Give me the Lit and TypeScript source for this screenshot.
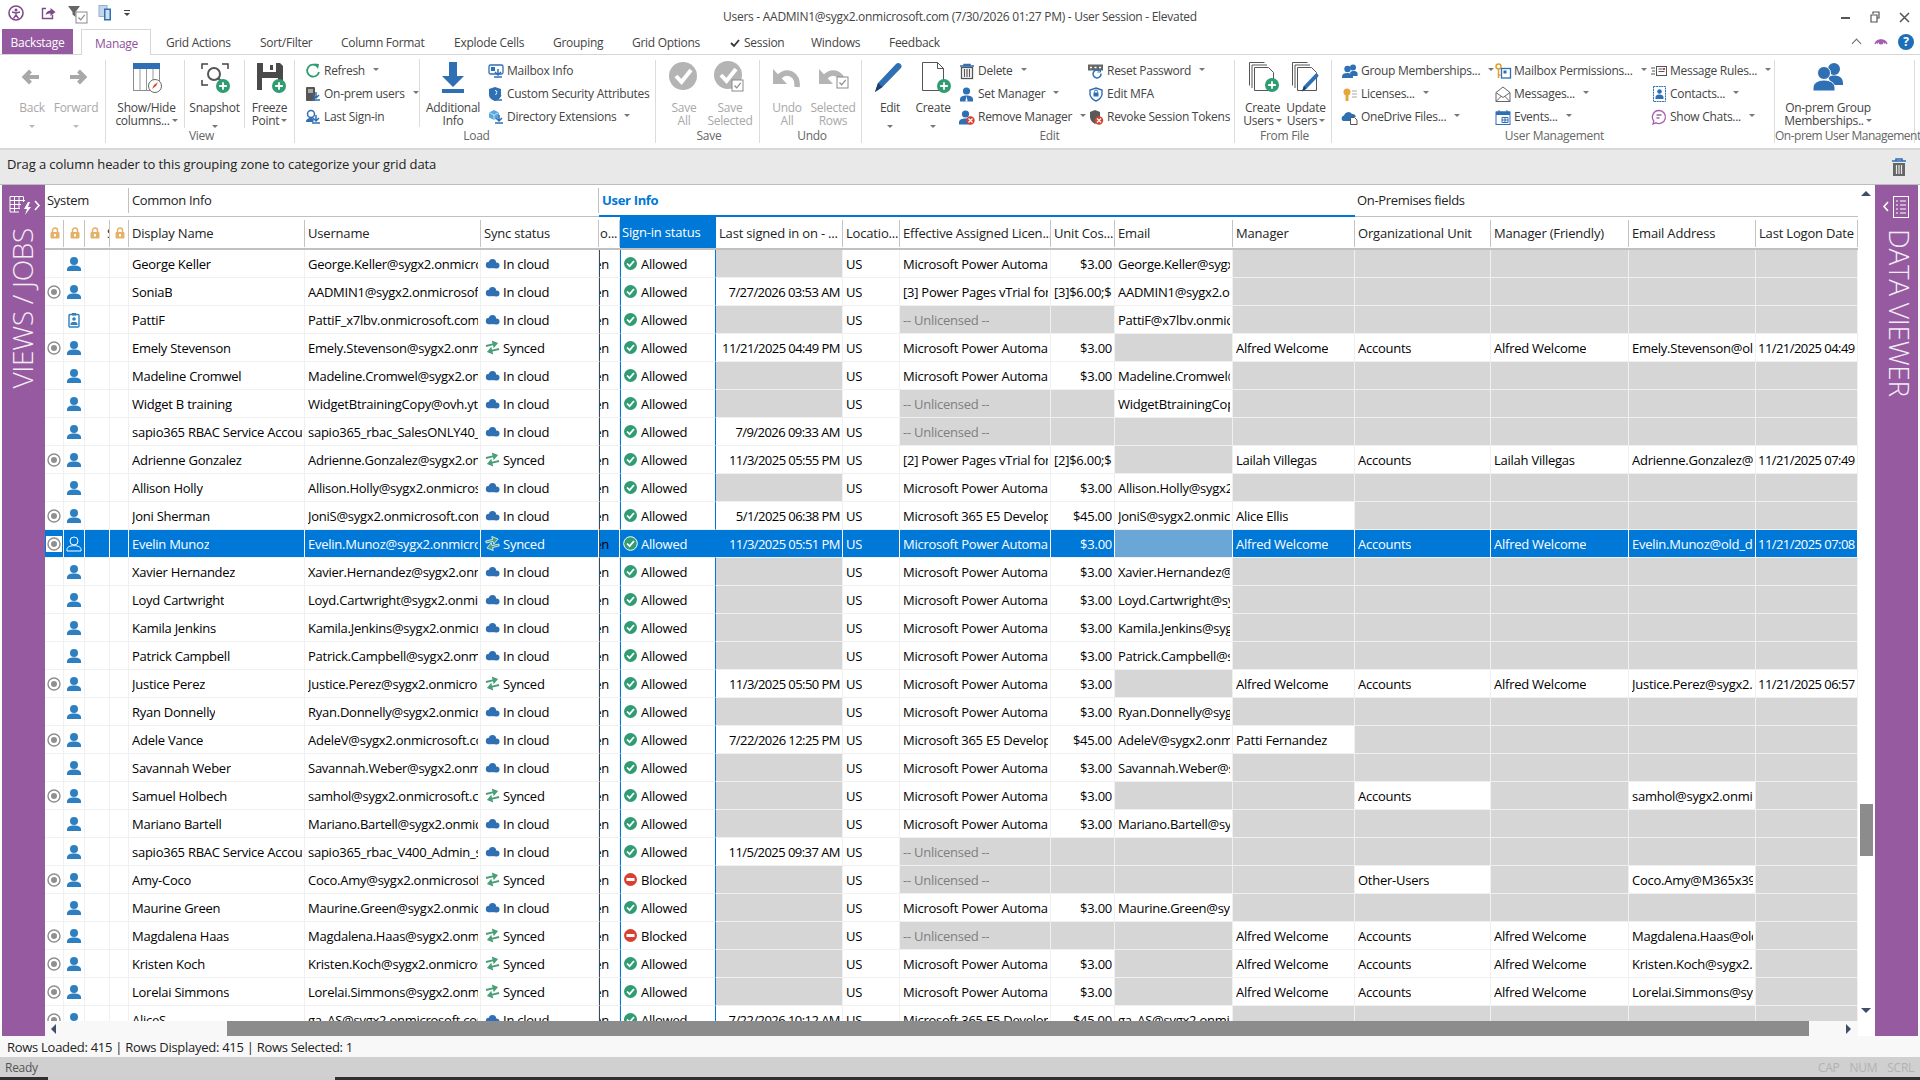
import { LitElement, html, css, svg, nothing } from 'lit';
import { customElement } from 'lit/decorators.js';
import { classMap } from 'lit/directives/class-map.js';

const BLUE = '#2f6fb3';
const GREEN = '#2f9c72';
const RED = '#d8412f';
const GREY = '#b4b4b4';

const plus = (cx: number, cy: number, r: number) => svg`
  <circle cx=${cx} cy=${cy} r=${r} fill=${GREEN} />
  <path d="M${cx - r * 0.55} ${cy}h${r * 1.1}M${cx} ${cy - r * 0.55}v${r * 1.1}" stroke="#fff" stroke-width="1.8" />`;

const redX = (cx: number, cy: number) => svg`
  <circle cx=${cx} cy=${cy} r="4.2" fill=${RED} />
  <path d="M${cx - 2} ${cy - 2}l4 4m0-4l-4 4" stroke="#fff" stroke-width="1.2" />`;

const downArrow = (cx: number, cy: number) => svg`
  <path d="M${cx} ${cy - 4}v6m-3-3l3 3 3-3M${cx - 4} ${cy + 4}h8" fill="none" stroke=${BLUE} stroke-width="1.5" />`;

const person = (color: string) => svg`
  <circle cx="8" cy="5" r="4" fill=${color} />
  <path d="M1 15v-1.500c0-2.600 2.700-4 7-4s7 1.400 7 4V15z" fill=${color} />`;

const checkBox = (x: number, y: number) => svg`
  <rect x=${x} y=${y} width="11" height="11" fill="#fff" stroke="#8a8a8a" />
  <path d="M${x + 2.5} ${y + 5.5}l2.2 2.4 4-5" fill="none" stroke="#8a8a8a" stroke-width="1.2" />`;

const pencil = (x: number, y: number, s: number) => svg`
  <g transform="translate(${x} ${y}) scale(${s})">
    <path d="M0 30l3-9L21 2c1.5-1.5 3-1.5 4.5 0s1.5 3 0 4.500L7.500 25z" fill=${BLUE} />
    <path d="M0 30l3-9 4.500 4z" fill="#1d3f66" />
  </g>`;

const undoShape = svg`
  <path d="M26 27c1-9-4-14-10-14-4 0-6 2-8 4" fill="none" stroke=${GREY} stroke-width="5.500" />
  <path d="M2 9v15h14z" fill=${GREY} />`;

const ICONS: Record<string, unknown> = {
  back: svg`<path d="M8 17h15M14.500 11l-6 6 6 6" fill="none" stroke="#a8a8a8" stroke-width="4" />`,
  forward: svg`<path d="M10 17h15M18.500 11l6 6-6 6" fill="none" stroke="#a8a8a8" stroke-width="4" />`,
  showhide: svg`
    <rect x="2.500" y="3.500" width="26" height="27" fill="#fff" stroke="#8d8d8d" />
    <rect x="2" y="3" width="27" height="6" fill=${BLUE} />
    <path d="M9 9v21M15.500 9v21M22 9v21" stroke="#9a9a9a" />
    <circle cx="24" cy="26" r="6.500" fill="#fff" stroke="#666" />
    <path d="M21 29l2-4 4-3-2 4z" fill="#d8412f" />`,
  snapshot: svg`
    <path d="M3 9V4h6M23 4h6v5M3 20v5h6" fill="none" stroke="#444" stroke-width="1.500" />
    <circle cx="15" cy="14" r="6" fill="none" stroke="#555" stroke-width="2" />
    <path d="M19 18l4 4" stroke="#555" stroke-width="2" />
    ${plus(24, 26, 7)}`,
  freeze: svg`
    <path d="M3 3h23l3 3v24H3z" fill="#4a4a4a" />
    <rect x="9" y="3" width="13" height="9" fill="#fff" />
    <rect x="16" y="5" width="3" height="5" fill="#4a4a4a" />
    <rect x="8" y="18" width="16" height="12" fill="#fff" />
    ${plus(25, 26, 7)}`,
  additional: svg`
    <path d="M12 2h8v14h7L16 27 5 16h7z" fill=${BLUE} />
    <rect x="5" y="29" width="22" height="4" fill=${BLUE} />`,
  saveAll: svg`
    <circle cx="15" cy="16" r="14" fill=${GREY} />
    <path d="M8 16l5.500 6L23 10" fill="none" stroke="#fff" stroke-width="4" />`,
  saveSel: svg`
    <circle cx="14" cy="15" r="14" fill=${GREY} />
    <path d="M7 15l5.500 6L22 9" fill="none" stroke="#fff" stroke-width="4" />
    <g transform="translate(18 20)">${checkBox(0, 0)}</g>`,
  undoAll: svg`${undoShape}`,
  undoSel: svg`
    ${undoShape}
    <g transform="translate(20 17)">${checkBox(0, 0)}</g>`,
  edit: svg`<g transform="translate(1 2)">${pencil(0, 0, 1)}</g>`,
  create: svg`
    <path d="M5.500 2.500h15l6 6v22h-21z" fill="#fff" stroke="#555" />
    <path d="M20.500 2.500v6h6" fill="none" stroke="#555" />
    ${plus(27, 26, 7)}`,
  createUsers: svg`
    <path d="M2.500 2.500h15M2.500 2.500v23M5 5h15M5 5v23" fill="none" stroke="#555" />
    <path d="M7.500 7.500h14l5 5v18h-19z" fill="#fff" stroke="#555" />
    ${plus(25, 25, 7)}`,
  updateUsers: svg`
    <path d="M2.500 2.500h15M2.500 2.500v23M5 5h15M5 5v23" fill="none" stroke="#555" />
    <path d="M7.500 7.500h14l5 5v18h-19z" fill="#fff" stroke="#555" />
    ${pencil(12, 13, 0.62)}`,
  groupsBig: svg`
    <circle cx="22" cy="9" r="6" fill=${BLUE} />
    <path d="M16 17c4-2 9-2 12 0s3 5 3 8H20z" fill=${BLUE} />
    <circle cx="12" cy="13" r="6.500" fill=${BLUE} stroke="#fff" />
    <path d="M1 31v-3c0-5 5-8 11-8s11 3 11 8v3z" fill=${BLUE} stroke="#fff" />`,
  refresh: svg`
    <path d="M12.500 3.500A6 6 0 1 0 14 9" fill="none" stroke=${GREEN} stroke-width="1.800" />
    <path d="M9 .5l5 .5-1 5z" fill=${GREEN} />`,
  onprem: svg`
    <rect x="1" y="1" width="9" height="14" rx="1" fill="#555" />
    <path d="M3 4h5M3 6h5" stroke="#fff" />
    ${downArrow(11, 10)}`,
  lastsign: svg`
    <circle cx="6" cy="5" r="3.500" fill="none" stroke=${BLUE} stroke-width="1.500" />
    <path d="M1 13c0-3 2-4 5-4 1 0 2 .2 2.500.5V13z" fill=${BLUE} />
    ${downArrow(11, 10)}`,
  mailbox: svg`
    <rect x="1" y="2" width="14" height="9" rx="1.500" fill="none" stroke=${BLUE} stroke-width="1.300" />
    <rect x="3" y="4" width="4" height="4" fill=${BLUE} />
    ${downArrow(10, 10)}`,
  security: svg`
    <path d="M7 1l6 2v6c0 3-3 5-6 6-3-1-6-3-6-6V3z" fill=${BLUE} />
    <path d="M7 4.500a2 2 0 0 1 0 4" fill="none" stroke="#fff" />
    ${downArrow(10, 10)}`,
  directory: svg`
    <path d="M6 1l5 2.500v5L6 11 1 8.500v-5z" fill="#5aa7de" />
    <path d="M1 3.500L6 6l5-2.500M6 6v5" fill="none" stroke="#fff" stroke-width=".6" />
    ${downArrow(11, 10)}`,
  trash: svg`
    <path d="M1 3h14M5 3V1.500h6V3" fill="none" stroke=${BLUE} stroke-width="1.500" />
    <rect x="2.500" y="4.500" width="11" height="11" fill="none" stroke="#555" stroke-width="1.300" />
    <path d="M5.500 6v8M8 6v8M10.500 6v8" stroke="#555" stroke-width="1.200" />`,
  setManager: svg`
    <circle cx="7.500" cy="5" r="3.600" fill=${BLUE} />
    <path d="M1 15.500v-2c0-2.600 2.500-4 6.500-4s6.500 1.400 6.500 4v2z" fill=${BLUE} />
    <path d="M7.500 10l-1.200 5.500h2.400z" fill="#fff" />`,
  removeManager: svg`
    <circle cx="6.500" cy="5" r="3.600" fill=${BLUE} />
    <path d="M0 15.500v-2c0-2.600 2.500-4 6.500-4 2 0 3 .3 4 1v5z" fill=${BLUE} />
    ${redX(11.500, 11.500)}`,
  resetPassword: svg`
    <rect x="0" y="1.500" width="15" height="6" fill="#666" />
    <path d="M2 4.500h2M6.500 4.500h2M11 4.500h2" stroke="#fff" stroke-width="1.600" />
    <path d="M13 10.500a4 4 0 1 1-1.500-2.700" fill="none" stroke=${BLUE} stroke-width="1.500" />
    <path d="M12.500 6v3h-3" fill="none" stroke=${BLUE} />`,
  mfa: svg`
    <path d="M8 2l6 2v4c0 3-3 6-6 7-3-1-6-4-6-7V4z" fill="none" stroke=${BLUE} stroke-width="1.400" />
    <rect x="5.500" y="6.500" width="5" height="4" fill=${BLUE} />
    <path d="M6.500 6.500v-1a1.500 1.500 0 0 1 3 0v1" fill="none" stroke=${BLUE} />`,
  revoke: svg`
    <path d="M7 1l5 2v5c0 3-2 5-5 7-3-2-5-4-5-7V3z" fill="#5a5a5a" />
    ${redX(11, 11.500)}`,
  groups: svg`
    <circle cx="11" cy="4.500" r="3" fill=${BLUE} />
    <path d="M8 9c2-1.500 6-1.500 7 0s.500 3 .500 4h-6z" fill=${BLUE} />
    <circle cx="5.500" cy="6" r="3.200" fill=${BLUE} />
    <path d="M0 15v-1.500C0 11 2.200 10 5.500 10s5.500 1 5.500 3.500V15z" fill=${BLUE} />`,
  mailboxPerm: svg`
    <circle cx="3.500" cy="3.500" r="2.500" fill="none" stroke="#e0a030" stroke-width="1.500" />
    <path d="M3.500 6v9M3.500 12h2" stroke="#e0a030" stroke-width="1.500" />
    <rect x="6.500" y="5.500" width="9" height="9.500" fill="none" stroke=${BLUE} stroke-width="1.300" />
    <rect x="8.500" y="7.500" width="3" height="3" fill=${BLUE} />`,
  licenses: svg`
    <circle cx="5" cy="6" r="3.500" fill="#e8a53a" />
    <rect x="3.500" y="9" width="3" height="6" fill="#e8a53a" />
    <path d="M10 5h5M10 8h5M10 11h5" stroke="#aaa" />`,
  onedrive: svg`
    <path d="M1 12a3 3 0 0 1 1-5.500 4.500 4.500 0 0 1 8-1.500 3.500 3.500 0 0 1 4 2.500L8 9.500V12z" fill=${BLUE} />
    <path d="M8.500 8.500h4l2.500 2.500v4.500H8.500z" fill="#fff" stroke="#555" />`,
  messages: svg`
    <path d="M1 6.500L8 1l7 5.500v9H1z" fill="#fff" stroke="#666" />
    <path d="M1 6.500l7 5 7-5M1 15.500l5.500-5.500M15 15.500L9.500 10" fill="none" stroke="#666" />`,
  events: svg`
    <rect x="1" y="3" width="14" height="12.500" fill="#fff" stroke=${BLUE} />
    <rect x="1" y="2.500" width="14" height="3.500" fill=${BLUE} />
    <path d="M4 1v3M12 1v3" stroke=${BLUE} />
    <path d="M7 8.500h6M7 11h6M7 13.500h6M7 8.500v5M10 8.500v5M13 8.500v5" stroke=${BLUE} fill="none" />`,
  rules: svg`
    <rect x="5.500" y="3.500" width="10" height="9" fill="#fff" stroke="#555" />
    <path d="M7.500 6h4M7.500 8.500h6M0 5h4M1 8h3M0 11h4" stroke="#555" />
    <rect x="12" y="5" width="2" height="2" fill="#d8412f" />`,
  contacts: svg`
    <rect x="2.500" y=".5" width="12" height="15" fill="#fff" stroke=${BLUE} stroke-dasharray="2 .6" />
    <circle cx="8.500" cy="5.500" r="2.300" fill=${BLUE} />
    <path d="M4.500 13v-1.500c0-2 1.500-3 4-3s4 1 4 3V13z" fill=${BLUE} />`,
  chats: svg`
    <path d="M8 1.500a6.500 6.500 0 1 1-3 12.300L2 15l.8-3A6.500 6.500 0 0 1 8 1.500z" fill="none" stroke="#a45db0" stroke-width="1.300" />
    <path d="M5.500 6h5M5.500 9h3" stroke="#a45db0" stroke-width="1.300" />`,
  logo: svg`
    <circle cx="8" cy="8" r="7" fill="none" stroke="#7d4a8c" stroke-width="1.600" />
    <circle cx="8" cy="5" r="1.500" fill="#7d4a8c" />
    <path d="M4 7l4 1 4-1M8 8v2l-2.500 3.500M8 10l2.500 3.500" fill="none" stroke="#7d4a8c" stroke-width="1.300" />`,
  share: svg`
    <path d="M6 3.500H2.500v10h10V10" fill="none" stroke="#7d4a8c" stroke-width="1.400" />
    <path d="M5.500 10c.5-3 2.500-4.500 5-4.500V3l5 4-5 4V8.500c-2 0-3.500.5-5 1.500z" fill="#7d4a8c" />`,
  funnel: svg`
    <path d="M0 1h12L7.500 7v5L4.500 9.500V7z" fill="#666" />
    ${checkBox(8, 7)}`,
  copies: svg`
    <rect x="1" y="0.500" width="8" height="11" fill="#c4d6ea" stroke="#8fb0d0" />
    <rect x="6" y="3.500" width="7" height="12" fill=${BLUE} />
    <rect x="7.500" y="5" width="4" height="9" fill="#cfe0f0" />`,
  bin: svg`
    <path d="M1 3h14M5 3V1h6v2" fill="none" stroke=${BLUE} stroke-width="1.600" />
    <rect x="2" y="5" width="12" height="13" fill="#666" />
    <path d="M5.500 7v9M8 7v9M10.500 7v9" stroke="#e9e9e9" stroke-width="1.200" />`,
  broadcast: svg`
    <circle cx="8" cy="8" r="2.500" fill="#a45db0" />
    <path d="M2 10a6.500 6.500 0 0 1 12 0M4 9.500a4.200 4.200 0 0 1 8 0" fill="none" stroke="#a45db0" stroke-width="1.400" />`,
  viewsJobs: svg`
    <path d="M1 1.500h13M1 5.500h15M1 9.500h11M1 13.500h10M1 17h9M1 1.500V17M5.500 1.500V17M10 1.500V14M14.500 1.500V7" fill="none" stroke="#fff" />
    <path d="M19 7l-4 7h3l-2 6 6-8h-3l2-5z" fill="#fff" />
    <path d="M26 6l4 4.500-4 4.500" fill="none" stroke="#fff" stroke-width="1.600" />`,
  dataViewer: svg`
    <path d="M6 7L2 11.500 6 16" fill="none" stroke="#fff" stroke-width="1.600" />
    <rect x="11.500" y="1.500" width="15" height="21" fill="none" stroke="#fff" />
    <path d="M14 6h2M18 6h6M14 10h2M18 10h6M14 14h2M18 14h6M14 18h2M18 18h6" stroke="#fff" />`,
};

const icon = (name: string, w = 16, h = 16) => html`
  <svg class="ico" width=${w} height=${h} viewBox="0 0 ${w} ${h}">${ICONS[name]}</svg>`;

const bigIcon = (name: string) => html`
  <svg class="ico" width="32" height="34" viewBox="0 0 32 34">${ICONS[name]}</svg>`;

const lockIcon = html`
  <svg class="ico" width="10" height="12" viewBox="0 0 10 12">
    <path d="M2.500 5V3.500a2.500 2.500 0 0 1 5 0V5" fill="none" stroke="#e6b167" stroke-width="1.500" />
    <rect x="0.500" y="5" width="9" height="6.500" rx="1" fill="#e6b167" />
    <rect x="4" y="7" width="2" height="2.500" fill="#fff" />
  </svg>`;

const circleIcon = html`
  <svg class="ico" width="14" height="14" viewBox="0 0 14 14">
    <circle cx="7" cy="7" r="6" fill="#fff" stroke="#8f8f8f" stroke-width="1.400" />
    <circle cx="7" cy="7" r="3" fill="#8f8f8f" />
  </svg>`;

const userIcon = (selected: boolean) => html`
  <svg class="ico" width="16" height="16" viewBox="0 0 16 16">
    ${selected
      ? svg`<circle cx="8" cy="5" r="4" fill="none" stroke="#fff" /><path d="M1 15v-1.500c0-2.400 2.500-3.800 7-3.800s7 1.400 7 3.800V15z" fill="none" stroke="#fff" />`
      : person('#2d7fc0')}
  </svg>`;

const badgeIcon = html`
  <svg class="ico" width="16" height="16" viewBox="0 0 16 16">
    <rect x="3" y="2.500" width="10" height="12.500" rx="1" fill="none" stroke="#2d7fc0" stroke-width="1.400" />
    <rect x="6" y="1" width="4" height="2.500" fill="#2d7fc0" />
    <circle cx="8" cy="7" r="1.800" fill="#2d7fc0" />
    <path d="M4.500 13v-1c0-1.400 1.500-2 3.500-2s3.500.6 3.500 2v1z" fill="#2d7fc0" />
  </svg>`;

const cloudIcon = html`
  <svg class="ico" width="15" height="12" viewBox="0 0 15 12">
    <circle cx="4" cy="7" r="3.200" fill="#2f6fb3" />
    <circle cx="7.500" cy="4.500" r="3.600" fill="#2f6fb3" />
    <circle cx="11.500" cy="7.500" r="3" fill="#2f6fb3" />
    <rect x="4" y="7" width="7.500" height="3.200" fill="#2f6fb3" />
  </svg>`;

const syncIcon = (selected: boolean) => html`
  <svg class="ico" width="15" height="15" viewBox="0 0 15 15">
    <g transform="rotate(-14 7.500 7.500)" stroke=${selected ? '#fff' : 'none'} stroke-width=".7">
      <path d="M1.500 3.500h7V.5l5.500 4-5.500 4v-3h-7z" fill="#4a9e78" />
      <path d="M13.500 9.500h-7v-3L1 10.500l5.500 4v-3h7z" fill="#4a9e78" />
    </g>
  </svg>`;

const allowedIcon = (selected: boolean) => html`
  <svg class="ico" width="15" height="15" viewBox="0 0 15 15">
    <circle cx="7.500" cy="7.500" r=${selected ? 6.800 : 6.500} fill="#2f9c72" stroke=${selected ? '#fff' : 'none'} />
    <path d="M4 7.500l2.600 2.700L11 5" fill="none" stroke="#fff" stroke-width="1.800" />
  </svg>`;

const blockedIcon = html`
  <svg class="ico" width="15" height="15" viewBox="0 0 15 15">
    <circle cx="7.500" cy="7.500" r="6.500" fill="#d8412f" />
    <rect x="3.500" y="6" width="8" height="3" fill="#fff" />
  </svg>`;

type SmallItem = { icon: string; text: string; caret?: boolean };
type RibbonItem =
  | { kind: 'large'; w: number; pad?: number; icon: string; lines: string[]; caret?: 'inline' | 'below'; off?: boolean; sep?: boolean }
  | { kind: 'stack'; w: number; pad: number; items: SmallItem[]; sep?: boolean };
type RibbonGroup = { w: number; pad?: number; label?: string; tight?: boolean; items: RibbonItem[] };

const GROUPS: RibbonGroup[] = [
  { w: 104, pad: 8, items: [
    { kind: 'large', w: 44, icon: 'back', lines: ['Back'], caret: 'below', off: true },
    { kind: 'large', w: 44, icon: 'forward', lines: ['Forward'], caret: 'below', off: true },
  ] },
  { w: 189, label: 'View', items: [
    { kind: 'large', w: 79, pad: 3, icon: 'showhide', lines: ['Show/Hide', 'columns...'], caret: 'inline', sep: true },
    { kind: 'large', w: 60, icon: 'snapshot', lines: ['Snapshot'], caret: 'below', sep: true },
    { kind: 'large', w: 49, icon: 'freeze', lines: ['Freeze', 'Point'], caret: 'inline' },
  ] },
  { w: 361, label: 'Load', items: [
    { kind: 'stack', w: 125, pad: 10, sep: true, items: [
      { icon: 'refresh', text: 'Refresh', caret: true },
      { icon: 'onprem', text: 'On-prem users', caret: true },
      { icon: 'lastsign', text: 'Last Sign-in' },
    ] },
    { kind: 'large', w: 66, icon: 'additional', lines: ['Additional', 'Info'] },
    { kind: 'stack', w: 169, pad: 2, items: [
      { icon: 'mailbox', text: 'Mailbox Info' },
      { icon: 'security', text: 'Custom Security Attributes' },
      { icon: 'directory', text: 'Directory Extensions', caret: true },
    ] },
  ] },
  { w: 104, pad: 4, label: 'Save', items: [
    { kind: 'large', w: 48, icon: 'saveAll', lines: ['Save', 'All'], off: true },
    { kind: 'large', w: 44, icon: 'saveSel', lines: ['Save', 'Selected'], off: true },
  ] },
  { w: 102, pad: 4, label: 'Undo', items: [
    { kind: 'large', w: 46, icon: 'undoAll', lines: ['Undo', 'All'], off: true },
    { kind: 'large', w: 46, icon: 'undoSel', lines: ['Selected', 'Rows'], off: true },
  ] },
  { w: 373, pad: 6, label: 'Edit', items: [
    { kind: 'large', w: 44, icon: 'edit', lines: ['Edit'], caret: 'below' },
    { kind: 'large', w: 42, icon: 'create', lines: ['Create'], caret: 'below' },
    { kind: 'stack', w: 129, pad: 5, items: [
      { icon: 'trash', text: 'Delete', caret: true },
      { icon: 'setManager', text: 'Set Manager', caret: true },
      { icon: 'removeManager', text: 'Remove Manager', caret: true },
    ] },
    { kind: 'stack', w: 150, pad: 5, items: [
      { icon: 'resetPassword', text: 'Reset Password', caret: true },
      { icon: 'mfa', text: 'Edit MFA' },
      { icon: 'revoke', text: 'Revoke Session Tokens' },
    ] },
  ] },
  { w: 97, pad: 3, label: 'From File', items: [
    { kind: 'large', w: 46, pad: 3, icon: 'createUsers', lines: ['Create', 'Users'], caret: 'inline' },
    { kind: 'large', w: 44, icon: 'updateUsers', lines: ['Update', 'Users'], caret: 'inline' },
  ] },
  { w: 443, pad: 6, label: 'User Management', items: [
    { kind: 'stack', w: 153, pad: 4, items: [
      { icon: 'groups', text: 'Group Memberships...', caret: true },
      { icon: 'licenses', text: 'Licenses...', caret: true },
      { icon: 'onedrive', text: 'OneDrive Files...', caret: true },
    ] },
    { kind: 'stack', w: 156, pad: 4, items: [
      { icon: 'mailboxPerm', text: 'Mailbox Permissions...', caret: true },
      { icon: 'messages', text: 'Messages...', caret: true },
      { icon: 'events', text: 'Events...', caret: true },
    ] },
    { kind: 'stack', w: 126, pad: 4, items: [
      { icon: 'rules', text: 'Message Rules...', caret: true },
      { icon: 'contacts', text: 'Contacts...', caret: true },
      { icon: 'chats', text: 'Show Chats...', caret: true },
    ] },
  ] },
  { w: 140, label: 'On-prem User Management', tight: true, items: [
    { kind: 'large', w: 106, icon: 'groupsBig', lines: ['On-prem Group', 'Memberships..'], caret: 'inline' },
  ] },
];

const TABS = [
  { text: 'Grid Actions', w: 94 },
  { text: 'Sort/Filter', w: 81 },
  { text: 'Column Format', w: 113 },
  { text: 'Explode Cells', w: 99 },
  { text: 'Grouping', w: 79 },
  { text: 'Grid Options', w: 98 },
  { text: 'Session', w: 81, check: true },
  { text: 'Windows', w: 78 },
  { text: 'Feedback', w: 78 },
];

const HEADERS = ['Display Name', 'Username', 'Sync status', 'o...', 'Sign-in status', 'Last signed in on - ...', 'Locatio...',
  'Effective Assigned Licen...', 'Unit Cos...', 'Email', 'Manager', 'Organizational Unit', 'Manager (Friendly)', 'Email Address', 'Last Logon Date'];

const MPA = 'Microsoft Power Automate Free';
const E5 = 'Microsoft 365 E5 Developer (without Windows)';
const AW = 'Alfred Welcome';
const UNLIC = '-- Unlicensed --';

type User = {
  name: string; upn: string; last?: string; lic: string; cost?: string; email?: string;
  mgr?: string; ou?: string; friendly?: string; addr?: string; logon?: string;
  onPrem?: boolean; circle?: boolean; blocked?: boolean; badge?: boolean; selected?: boolean;
};

const cloudUser = (name: string, upn: string, email: string): User => ({ name, upn, lic: MPA, cost: '$3.00', email });
const synced = (name: string, upn: string, addr: string, extra: Partial<User> = {}): User => ({
  name, upn, lic: MPA, cost: '$3.00', mgr: AW, ou: 'Accounts', friendly: AW, addr, onPrem: true, circle: true, ...extra,
});

const USERS: User[] = [
  cloudUser('George Keller', 'George.Keller@sygx2.onmicrosoft.com', 'George.Keller@sygx2.onmicrosoft.com'),
  { name: 'SoniaB', upn: 'AADMIN1@sygx2.onmicrosoft.com', last: '7/27/2026 03:53 AM', lic: '[3] Power Pages vTrial for Makers', cost: '[3]$6.00;$3.00;$3.00', email: 'AADMIN1@sygx2.onmicrosoft.com', circle: true },
  { name: 'PattiF', upn: 'PattiF_x7lbv.onmicrosoft.com#EXT#', lic: UNLIC, email: 'PattiF@x7lbv.onmicrosoft.com', badge: true },
  synced('Emely Stevenson', 'Emely.Stevenson@sygx2.onmicrosoft.com', 'Emely.Stevenson@old_domain.com', { last: '11/21/2025 04:49 PM', logon: '11/21/2025 04:49 PM' }),
  cloudUser('Madeline Cromwel', 'Madeline.Cromwel@sygx2.onmicrosoft.com', 'Madeline.Cromwel@sygx2.onmicrosoft.com'),
  { name: 'Widget B training', upn: 'WidgetBtrainingCopy@ovh.ytt.com', lic: UNLIC, email: 'WidgetBtrainingCopy@ovh.ytt.com' },
  { name: 'sapio365 RBAC Service Account', upn: 'sapio365_rbac_SalesONLY40_admin', last: '7/9/2026 09:33 AM', lic: UNLIC },
  synced('Adrienne Gonzalez', 'Adrienne.Gonzalez@sygx2.onmicrosoft.com', 'Adrienne.Gonzalez@old_domain.com', { last: '11/3/2025 05:55 PM', lic: '[2] Power Pages vTrial for Makers', cost: '[2]$6.00;$3.00', mgr: 'Lailah Villegas', friendly: 'Lailah Villegas', logon: '11/21/2025 07:49 PM' }),
  cloudUser('Allison Holly', 'Allison.Holly@sygx2.onmicrosoft.com', 'Allison.Holly@sygx2.onmicrosoft.com'),
  { name: 'Joni Sherman', upn: 'JoniS@sygx2.onmicrosoft.com', last: '5/1/2025 06:38 PM', lic: E5, cost: '$45.00', email: 'JoniS@sygx2.onmicrosoft.com', mgr: 'Alice Ellis', circle: true },
  synced('Evelin Munoz', 'Evelin.Munoz@sygx2.onmicrosoft.com', 'Evelin.Munoz@old_domain.com', { last: '11/3/2025 05:51 PM', logon: '11/21/2025 07:08 PM', selected: true }),
  cloudUser('Xavier Hernandez', 'Xavier.Hernandez@sygx2.onmicrosoft.com', 'Xavier.Hernandez@sygx2.onmicrosoft.com'),
  cloudUser('Loyd Cartwright', 'Loyd.Cartwright@sygx2.onmicrosoft.com', 'Loyd.Cartwright@sygx2.onmicrosoft.com'),
  cloudUser('Kamila Jenkins', 'Kamila.Jenkins@sygx2.onmicrosoft.com', 'Kamila.Jenkins@sygx2.onmicrosoft.com'),
  cloudUser('Patrick Campbell', 'Patrick.Campbell@sygx2.onmicrosoft.com', 'Patrick.Campbell@sygx2.onmicrosoft.com'),
  synced('Justice Perez', 'Justice.Perez@sygx2.onmicrosoft.com', 'Justice.Perez@sygx2.onmicrosoft.com', { last: '11/3/2025 05:50 PM', logon: '11/21/2025 06:57 PM' }),
  cloudUser('Ryan Donnelly', 'Ryan.Donnelly@sygx2.onmicrosoft.com', 'Ryan.Donnelly@sygx2.onmicrosoft.com'),
  { name: 'Adele Vance', upn: 'AdeleV@sygx2.onmicrosoft.com', last: '7/22/2026 12:25 PM', lic: E5, cost: '$45.00', email: 'AdeleV@sygx2.onmicrosoft.com', mgr: 'Patti Fernandez', circle: true },
  cloudUser('Savannah Weber', 'Savannah.Weber@sygx2.onmicrosoft.com', 'Savannah.Weber@sygx2.onmicrosoft.com'),
  { name: 'Samuel Holbech', upn: 'samhol@sygx2.onmicrosoft.com', lic: MPA, cost: '$3.00', ou: 'Accounts', addr: 'samhol@sygx2.onmicrosoft.com', onPrem: true, circle: true },
  cloudUser('Mariano Bartell', 'Mariano.Bartell@sygx2.onmicrosoft.com', 'Mariano.Bartell@sygx2.onmicrosoft.com'),
  { name: 'sapio365 RBAC Service Account', upn: 'sapio365_rbac_V400_Admin_sygx2', last: '11/5/2025 09:37 AM', lic: UNLIC },
  { name: 'Amy-Coco', upn: 'Coco.Amy@sygx2.onmicrosoft.com', lic: UNLIC, ou: 'Other-Users', addr: 'Coco.Amy@M365x39.com', onPrem: true, circle: true, blocked: true },
  cloudUser('Maurine Green', 'Maurine.Green@sygx2.onmicrosoft.com', 'Maurine.Green@sygx2.onmicrosoft.com'),
  synced('Magdalena Haas', 'Magdalena.Haas@sygx2.onmicrosoft.com', 'Magdalena.Haas@old_domain.com', { lic: UNLIC, cost: undefined, blocked: true }),
  synced('Kristen Koch', 'Kristen.Koch@sygx2.onmicrosoft.com', 'Kristen.Koch@sygx2.onmicrosoft.com'),
  synced('Lorelai Simmons', 'Lorelai.Simmons@sygx2.onmicrosoft.com', 'Lorelai.Simmons@sygx2.onmicrosoft.com'),
  { name: 'AliceS', upn: 'ga_AS@sygx2.onmicrosoft.com', last: '7/22/2026 10:12 AM', lic: E5, cost: '$45.00', email: 'ga_AS@sygx2.onmicrosoft.com', circle: true },
];

@customElement('app-root')
export class AppRoot extends LitElement {
  static styles = css`
    :host {
      display: flex;
      flex-direction: column;
      width: 1920px;
      height: 1080px;
      overflow: hidden;
      background: #fff;
      color: #000;
      font-family: 'Open Sans', 'Noto Sans', sans-serif;
      font-size: 12px;
      letter-spacing: -0.28px;
      --cols: 19px 21px 25px 19px 176px 176px 118px 21px 96px 127px 57px 151px 64px 118px 122px 136px 138px 127px 102px;
    }
    .ico { display: block; flex: none; overflow: visible; }

    /* title bar */
    .title-bar {
      flex: none;
      height: 28px;
      display: grid;
      grid-template-columns: 1fr auto 1fr;
      align-items: center;
      color: #444;
      padding-top: 2px;
      box-sizing: border-box;
    }
    .title-text { margin-top: 2px; }
    .qat { display: flex; align-items: center; height: 24px; padding-left: 8px; margin-top: -5px; }
    .qat-a { width: 32px; }
    .qat-b { width: 28px; }
    .qat-c { width: 22px; padding-left: 2px; }
    .qat-more {
      width: 6px;
      height: 6px;
      margin-left: 4px;
      border-top: 1px solid #444;
      box-sizing: border-box;
    }
    .qat-more::after {
      content: '';
      display: block;
      margin-top: 2px;
      border-left: 3px solid transparent;
      border-right: 3px solid transparent;
      border-top: 3px solid #444;
    }
    .win { display: flex; justify-content: flex-end; align-items: center; gap: 19px; padding-right: 10px; margin-top: 4px; }

    /* tabs */
    .tabs {
      flex: none;
      height: 27px;
      display: flex;
      box-sizing: border-box;
      padding: 1px 0 0 2px;
      border-bottom: 1px solid #d6d6d6;
      color: #444;
    }
    .backstage {
      width: 71px;
      background: #955a9f;
      color: #fff;
      display: flex;
      align-items: center;
      justify-content: center;
      margin-right: 8px;
      padding-top: 2px;
      box-sizing: border-box;
    }
    .tab { display: flex; align-items: center; padding: 2px 0 0 14px; gap: 4px; box-sizing: border-box; }
    .tab.active {
      width: 70px;
      margin-right: 1px;
      height: 26px;
      padding-left: 13px;
      background: #fff;
      color: #8f4f9b;
      border: 1px solid #d6d6d6;
      border-bottom: 0;
    }
    .tab-tools { margin-left: auto; display: flex; align-items: center; gap: 9px; padding-right: 6px; }
    .collapse {
      width: 6px;
      height: 6px;
      border-left: 1.500px solid #666;
      border-top: 1.500px solid #666;
      transform: rotate(45deg);
      margin-top: 4px;
      margin-right: 4px;
    }
    .help {
      width: 16px;
      height: 16px;
      border-radius: 50%;
      background: #1e6fb8;
      color: #fff;
      font-weight: 700;
      font-size: 12px;
      display: flex;
      align-items: center;
      justify-content: center;
    }

    /* ribbon */
    .ribbon {
      flex: none;
      height: 95px;
      display: flex;
      align-items: flex-start;
      padding-left: 2px;
      box-sizing: border-box;
      border-bottom: 2px solid #d9d9d9;
      color: #444;
    }
    .group {
      flex: none;
      height: 83px;
      margin-top: 5px;
      box-sizing: border-box;
      border-right: 1px solid #dcdcdc;
      display: flex;
      flex-direction: column;
    }
    .group-body { display: flex; height: 69px; }
    .group-label { height: 13px; line-height: 13px; padding-left: 3px; text-align: center; color: #666; white-space: nowrap; }
    .group-label.tight { padding-left: 0; letter-spacing: -0.5px; }
    .large {
      flex: none;
      display: flex;
      flex-direction: column;
      align-items: center;
      box-sizing: border-box;
      line-height: 13px;
      white-space: nowrap;
    }
    .large.off { color: #a8a8a8; }
    .large.sep, .stack.sep { border-right: 1px solid #dcdcdc; height: 68px; }
    .large-icon { height: 34px; display: flex; align-items: center; margin-bottom: 7px; }
    .label-line { display: flex; align-items: center; gap: 2px; height: 13px; }
    .caret {
      display: block;
      flex: none;
      width: 0;
      height: 0;
      border-left: 3px solid transparent;
      border-right: 3px solid transparent;
      border-top: 3px solid #777;
    }
    .off .caret { border-top-color: #bbb; }
    .stack { flex: none; box-sizing: border-box; margin-top: -1px; }
    .small { display: flex; align-items: center; height: 23px; white-space: nowrap; gap: 3px; }
    .small .caret { margin-left: 5px; margin-bottom: 3px; }

    /* grouping zone */
    .zone {
      flex: none;
      height: 35px;
      box-sizing: border-box;
      background: #e9e9e9;
      border-bottom: 1px solid #bdbdbd;
      display: flex;
      align-items: center;
      justify-content: space-between;
      padding: 0 13px 0 7px;
      color: #222;
      font-size: 13px;
      letter-spacing: -0.1px;
    }
    .zone-text { padding-bottom: 6px; }

    /* main */
    .main { flex: 1; min-height: 0; display: flex; padding: 0 2px; }
    .side {
      flex: none;
      background: #955a9f;
      color: #f3ecf5;
      display: flex;
      flex-direction: column;
      align-items: center;
      font-weight: 300;
      font-size: 28px;
      letter-spacing: -0.3px;
      line-height: 32px;
      white-space: nowrap;
    }
    .side-left { width: 43px; padding-top: 10px; box-sizing: border-box; }
    .side-left .ico { margin-bottom: 12px; margin-left: 2px; }
    .side-left .side-text { writing-mode: vertical-rl; transform: rotate(180deg); margin-right: 3px; }
    .side-right { width: 43px; padding-top: 10px; box-sizing: border-box; }
    .side-right .ico { margin-bottom: 10px; margin-right: 1px; }
    .side-right .side-text { writing-mode: vertical-rl; margin-left: 7px; }

    .grid {
      flex: none;
      width: 1813px;
      display: flex;
      flex-direction: column;
      min-height: 0;
      font-size: 13px;
      letter-spacing: -0.25px;
    }
    .group-head {
      flex: none;
      height: 32px;
      display: grid;
      grid-template-columns: var(--cols);
      box-sizing: border-box;
      border-bottom: 1px solid #c0c0c0;
      letter-spacing: -0.32px;
    }
    .gh { display: flex; align-items: center; position: relative; padding: 0 0 2px 3px; color: #222; }
    .gh-system { grid-column: span 4; padding-left: 2px; }
    .gh-common { grid-column: span 3; }
    .gh-user { grid-column: span 8; color: #0078d7; font-weight: 700; }
    .gh-prem { grid-column: span 4; padding-left: 2px; }
    .gh-system::after, .gh-common::after {
      content: '';
      position: absolute;
      right: 0;
      top: 3px;
      bottom: 3px;
      width: 1px;
      background: #c0c0c0;
    }
    .gh-user::before {
      content: '';
      position: absolute;
      left: 0;
      right: 0;
      bottom: -1px;
      height: 2px;
      background: #0078d7;
    }
    .col-head {
      flex: none;
      height: 33px;
      display: grid;
      grid-template-columns: var(--cols);
      box-sizing: border-box;
      border-bottom: 2px solid #c0c0c0;
      letter-spacing: -0.18px;
    }
    .hc {
      display: flex;
      align-items: center;
      overflow: hidden;
      white-space: nowrap;
      padding-left: 3px;
      box-sizing: border-box;
      position: relative;
      color: #222;
    }
    .hc::after {
      content: '';
      position: absolute;
      right: 0;
      top: 3px;
      bottom: 1px;
      width: 1px;
      background: #c4c4c4;
    }
    .hc.lock { justify-content: center; padding: 0; }
    .hc.lock3 { justify-content: flex-start; padding-left: 5px; gap: 7px; }
    .hc.narrow { padding-left: 1px; }
    .hc.sel { background: #0078d7; color: #fff; margin-top: -1px; padding-left: 2px; }
    .hc.sel::after { display: none; }
    .rows { flex: 1; min-height: 0; overflow: hidden; }
    .row { display: grid; grid-template-columns: var(--cols); height: 28px; }
    .cell {
      display: flex;
      align-items: center;
      min-width: 0;
      padding: 0 2px 0 3px;
      box-sizing: border-box;
      border-right: 1px solid #f0f0f0;
      border-bottom: 1px solid #f0f0f0;
      white-space: nowrap;
    }
    .cell.null { background: #d6d6d6; }
    .cell.muted { background: #d6d6d6; color: #7f7f7f; }
    .cell.center { justify-content: center; padding: 0; }
    .cell.right { justify-content: flex-end; }
    .cell.date { letter-spacing: -0.55px; padding-left: 2px; }
    .text { overflow: hidden; min-width: 0; }
    .cell.right .text { text-align: right; }
    .cell.frozen {
      position: relative;
      justify-content: flex-end;
      padding: 0 10px 0 0;
      overflow: hidden;
      border-left: 1px solid #3b4a63;
    }
    .cell.signin {
      gap: 3px;
      padding-left: 2px;
      border-left: 1px solid #0078d7;
      border-right: 1px solid #0078d7;
    }
    .cell.sync { gap: 3px; padding-left: 4px; }
    .row.selected { background: #0078d7; color: #fff; }
    .row.selected .cell { border-right-color: #fff; }
    .row.selected .cell.null { background: #6aa6d6; }
    .row.selected .cell.frozen { color: #000; }
    .row.selected .cell.signin { border-right-color: #0078d7; border-left-color: #0078d7; }
    .row.selected .center-white { display: block; background: #fff; padding: 1px; }

    .hbar {
      flex: none;
      height: 15px;
      display: flex;
      align-items: center;
      background: #f8f8f8;
      position: relative;
    }
    .arrow-l, .arrow-r { width: 0; height: 0; border-top: 5px solid transparent; border-bottom: 5px solid transparent; flex: none; }
    .arrow-l { border-right: 5px solid #3f4c6b; margin-left: 6px; }
    .arrow-r { border-left: 5px solid #3f4c6b; margin-left: 37px; }
    .hthumb { height: 15px; width: 1582px; background: #8c8c8c; margin-left: 171px; flex: none; }

    .vbar {
      flex: none;
      width: 17px;
      padding-right: 2px;
      box-sizing: border-box;
      display: flex;
      flex-direction: column;
      align-items: center;
      background: #fff;
    }
    .arrow-u, .arrow-d { width: 0; height: 0; border-left: 5px solid transparent; border-right: 5px solid transparent; flex: none; }
    .arrow-u { border-bottom: 5px solid #3f4c6b; margin-top: 6px; }
    .arrow-d { border-top: 5px solid #3f4c6b; margin-top: 152px; }
    .vthumb { width: 13px; height: 52px; background: #8c8c8c; margin-top: 608px; margin-left: 2px; flex: none; }

    /* footers */
    .counts {
      flex: none;
      height: 21px;
      display: flex;
      align-items: center;
      padding-left: 7px;
      background: #f8f8f8;
      color: #222;
      font-size: 13px;
      letter-spacing: -0.28px;
    }
    .status {
      flex: none;
      height: 20px;
      display: flex;
      align-items: center;
      justify-content: space-between;
      padding: 0 6px 0 5px;
      background: #d0d0d0;
      color: #555;
    }
    .locks { display: flex; gap: 10px; color: #b2b2b2; }
    .strip { flex: none; height: 3px; display: flex; background: #303030; }
    .strip-a { width: 48px; }
    .strip-b { width: 287px; background: #cfcfcf; }
  `;

  private renderLarge(it: Extract<RibbonItem, { kind: 'large' }>) {
    const caret = html`<span class="caret"></span>`;
    return html`
      <div class=${classMap({ large: true, off: !!it.off, sep: !!it.sep })} style="width:${it.w}px;padding-left:${it.pad ?? 0}px">
        <div class="large-icon">${bigIcon(it.icon)}</div>
        ${it.lines.map((line, i) => html`
          <div class="label-line">${line}${it.caret === 'inline' && i === it.lines.length - 1 ? caret : nothing}</div>`)}
        ${it.caret === 'below' ? html`<span class="caret" style="margin-top:${it.lines.length === 1 ? 11 : 3}px"></span>` : nothing}
      </div>`;
  }

  private renderStack(it: Extract<RibbonItem, { kind: 'stack' }>) {
    return html`
      <div class=${classMap({ stack: true, sep: !!it.sep })} style="width:${it.w}px;padding-left:${it.pad}px">
        ${it.items.map((s) => html`
          <div class="small">${icon(s.icon)}<span>${s.text}</span>${s.caret ? html`<span class="caret"></span>` : nothing}</div>`)}
      </div>`;
  }

  private renderRibbon() {
    return html`
      <div class="ribbon">
        ${GROUPS.map((g) => html`
          <div class="group" style="width:${g.w}px">
            <div class="group-body" style="padding-left:${g.pad ?? 0}px">
              ${g.items.map((it) => (it.kind === 'large' ? this.renderLarge(it) : this.renderStack(it)))}
            </div>
            <div class=${classMap({ 'group-label': true, tight: !!g.tight })}>${g.label ?? ''}</div>
          </div>`)}
      </div>`;
  }

  private renderRow(u: User) {
    const sel = !!u.selected;
    const txt = (value?: string, cls = '') => html`
      <div class="cell ${value ? cls : 'null'}">${value ? html`<span class="text">${value}</span>` : nothing}</div>`;
    return html`
      <div class=${classMap({ row: true, selected: sel })}>
        <div class="cell center">
          ${u.circle ? html`<span class=${sel ? 'center-white' : ''}>${circleIcon}</span>` : nothing}
        </div>
        <div class="cell center">${u.badge ? badgeIcon : userIcon(sel)}</div>
        <div class="cell"></div>
        <div class="cell"></div>
        ${txt(u.name)}
        ${txt(u.upn)}
        <div class="cell sync">
          ${u.onPrem ? syncIcon(sel) : cloudIcon}
          <span class="text">${u.onPrem ? 'Synced' : 'In cloud'}</span>
        </div>
        <div class="cell frozen"><span>Open</span></div>
        <div class="cell signin">
          ${u.blocked ? blockedIcon : allowedIcon(sel)}
          <span class="text">${u.blocked ? 'Blocked' : 'Allowed'}</span>
        </div>
        ${txt(u.last, 'right date')}
        ${txt('US')}
        ${txt(u.lic, u.lic === UNLIC ? 'muted' : '')}
        ${txt(u.cost, 'right')}
        ${txt(u.email)}
        ${txt(u.mgr)}
        ${txt(u.ou)}
        ${txt(u.friendly)}
        ${txt(u.addr)}
        ${txt(u.logon, 'date')}
      </div>`;
  }

  render() {
    return html`
      <div class="title-bar">
        <div class="qat">
          <span class="qat-a">${icon('logo')}</span>
          <span class="qat-b">${icon('share')}</span>
          <span class="qat-b">${icon('funnel')}</span>
          <span class="qat-c">${icon('copies')}</span>
          <span class="qat-more"></span>
        </div>
        <div class="title-text">Users - AADMIN1@sygx2.onmicrosoft.com (7/30/2026 01:27 PM) - User Session - Elevated</div>
        <div class="win">
          <svg class="ico" width="10" height="10" viewBox="0 0 10 10"><path d="M0 6h9" stroke="#555" stroke-width="2" /></svg>
          <svg class="ico" width="10" height="12" viewBox="0 0 10 12"><path d="M3 3V1h6v6H7M1 4h6v7H1z" fill="none" stroke="#555" stroke-width="1.200" /></svg>
          <svg class="ico" width="11" height="11" viewBox="0 0 11 11"><path d="M1 1l9 9m0-9l-9 9" stroke="#555" stroke-width="1.500" /></svg>
        </div>
      </div>

      <div class="tabs">
        <div class="backstage">Backstage</div>
        <div class="tab active">Manage</div>
        ${TABS.map((t) => html`
          <div class="tab" style="width:${t.w}px">
            ${t.check ? html`<svg class="ico" width="10" height="10" viewBox="0 0 10 10"><path d="M1 5l3 3 5-6" fill="none" stroke="#333" stroke-width="1.800" /></svg>` : nothing}
            ${t.text}
          </div>`)}
        <div class="tab-tools">
          <span class="collapse"></span>
          ${icon('broadcast')}
          <span class="help">?</span>
        </div>
      </div>

      ${this.renderRibbon()}

      <div class="zone">
        <span class="zone-text">Drag a column header to this grouping zone to categorize your grid data</span>
        ${icon('bin', 16, 18)}
      </div>

      <div class="main">
        <div class="side side-left">
          <svg class="ico" width="32" height="21" viewBox="0 0 32 21">${ICONS.viewsJobs}</svg>
          <div class="side-text">VIEWS / JOBS</div>
        </div>

        <div class="grid">
          <div class="group-head">
            <div class="gh gh-system">System</div>
            <div class="gh gh-common">Common Info</div>
            <div class="gh gh-user">User Info</div>
            <div class="gh gh-prem">On-Premises fields</div>
          </div>
          <div class="col-head">
            <div class="hc lock">${lockIcon}</div>
            <div class="hc lock">${lockIcon}</div>
            <div class="hc lock lock3">${lockIcon}<span>S</span></div>
            <div class="hc lock">${lockIcon}</div>
            ${HEADERS.map((h) => html`
              <div class=${classMap({ hc: true, narrow: h === 'o...', sel: h === 'Sign-in status' })}>${h}</div>`)}
          </div>
          <div class="rows">${USERS.map((u) => this.renderRow(u))}</div>
          <div class="hbar">
            <span class="arrow-l"></span>
            <span class="hthumb"></span>
            <span class="arrow-r"></span>
          </div>
        </div>

        <div class="vbar">
          <span class="arrow-u"></span>
          <span class="vthumb"></span>
          <span class="arrow-d"></span>
        </div>

        <div class="side side-right">
          <svg class="ico" width="28" height="24" viewBox="0 0 28 24">${ICONS.dataViewer}</svg>
          <div class="side-text">DATA VIEWER</div>
        </div>
      </div>

      <div class="counts">Rows Loaded: 415 | Rows Displayed: 415 | Rows Selected: 1</div>
      <div class="status">
        <span>Ready</span>
        <span class="locks"><span>CAP</span><span>NUM</span><span>SCRL</span></span>
      </div>
      <div class="strip"><span class="strip-a"></span><span class="strip-b"></span></div>
    `;
  }
}
